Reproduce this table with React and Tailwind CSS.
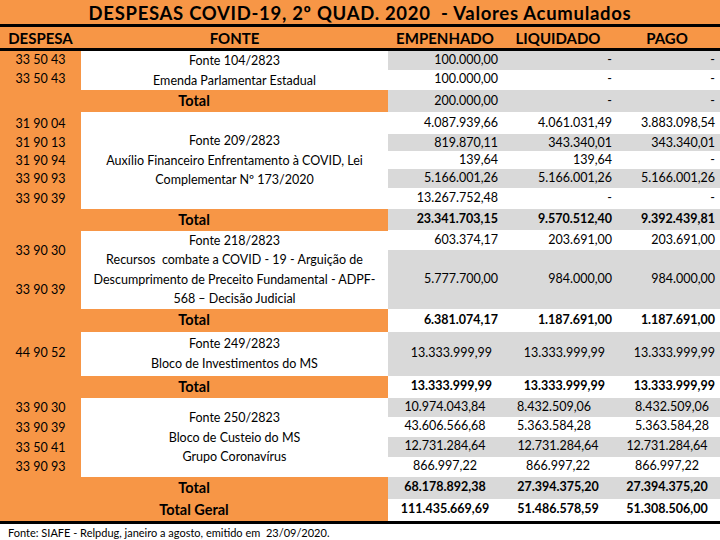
const ORANGE = 'bg-[#f79646]';
const GRAY = 'bg-[#d9d9d9]';

// right-aligned padding for the three value columns
const R = ['justify-end pr-[4px]', 'justify-end pr-[2px]', 'justify-end pr-[5px]'];
const C = ['justify-center', 'justify-center', 'justify-center'];
const B4 = ['justify-end pr-[10px]', 'justify-end pr-[9px]', 'justify-end pr-[5px]'];
const L5 = ['justify-center', 'justify-start pl-[15px]', 'justify-start pl-[21px]'];

const blocks = [
  {
    codes: [
      { t: '33 50 43', h: 'h-[19px]' },
      { t: '33 50 43', h: 'h-[18px]' },
    ],
    fonte: ['Fonte 104/2823', 'Emenda Parlamentar Estadual'],
    rows: [
      { v: ['100.000,00', '-', '-'], h: 'h-[19px]', gray: true },
      { v: ['100.000,00', '-', '-'], h: 'h-[18px]' },
    ],
    total: { v: ['200.000,00', '-', '-'], h: 'h-[22px]', gray: true, plain: true },
  },
  {
    codes: [
      { t: '31 90 04', h: 'h-[22px] pt-[2px]' },
      { t: '31 90 13', h: 'h-[17px] pt-[2px]' },
      { t: '31 90 94', h: 'h-[18px] pt-[2px]' },
      { t: '33 90 93', h: 'h-[19px] pt-[2px]' },
      { t: '33 90 39', h: 'h-[21px] pt-[2px]' },
    ],
    fonte: ['Fonte 209/2823', 'Auxílio Financeiro Enfrentamento à COVID, Lei', 'Complementar Nº 173/2020'],
    rows: [
      { v: ['4.087.939,66', '4.061.031,49', '3.883.098,54'], h: 'h-[22px]' },
      { v: ['819.870,11', '343.340,01', '343.340,01'], h: 'h-[17px]', gray: true },
      { v: ['139,64', '139,64', '-'], h: 'h-[18px]' },
      { v: ['5.166.001,26', '5.166.001,26', '5.166.001,26'], h: 'h-[19px]', gray: true },
      { v: ['13.267.752,48', '-', '-'], h: 'h-[21px]' },
    ],
    total: { v: ['23.341.703,15', '9.570.512,40', '9.392.439,81'], h: 'h-[21px]', gray: true },
  },
  {
    codes: [
      { t: '33 90 30', h: 'h-[42px]' },
      { t: '33 90 39', h: 'h-[36px]' },
    ],
    fonte: [
      'Fonte 218/2823',
      'Recursos  combate a COVID - 19 - Arguição de',
      'Descumprimento de Preceito Fundamental - ADPF-',
      '568 – Decisão Judicial',
    ],
    rows: [
      { v: ['603.374,17', '203.691,00', '203.691,00'], h: 'h-[19px]' },
      { v: ['5.777.700,00', '984.000,00', '984.000,00'], h: 'h-[59px]', gray: true },
    ],
    total: { v: ['6.381.074,17', '1.187.691,00', '1.187.691,00'], h: 'h-[23px]' },
  },
  {
    codes: [{ t: '44 90 52', h: 'h-[44px]' }],
    fonte: ['Fonte 249/2823', 'Bloco de Investimentos do MS'],
    rows: [{ v: ['13.333.999,99', '13.333.999,99', '13.333.999,99'], h: 'h-[44px]', gray: true, al: B4 }],
    total: { v: ['13.333.999,99', '13.333.999,99', '13.333.999,99'], h: 'h-[22px]', al: B4 },
  },
  {
    codes: [
      { t: '33 90 30', h: 'h-[19px] pt-[3px]' },
      { t: '33 90 39', h: 'h-[20px] pt-[3px]' },
      { t: '33 50 41', h: 'h-[20px] pt-[3px]' },
      { t: '33 90 93', h: 'h-[20px] pt-[2px]' },
    ],
    fonte: ['Fonte 250/2823', 'Bloco de Custeio do MS', 'Grupo Coronavírus'],
    rows: [
      { v: ['10.974.043,84', '8.432.509,06', '8.432.509,06'], h: 'h-[19px]', gray: true, al: L5 },
      { v: ['43.606.566,68', '5.363.584,28', '5.363.584,28'], h: 'h-[20px]', al: L5 },
      { v: ['12.731.284,64', '12.731.284,64', '12.731.284,64'], h: 'h-[20px]', gray: true, al: C },
      { v: ['866.997,22', '866.997,22', '866.997,22'], h: 'h-[20px]', al: C },
    ],
    total: { v: ['68.178.892,38', '27.394.375,20', '27.394.375,20'], h: 'h-[22px]', gray: true, al: C },
  },
];

function Values({ row, bold }) {
  const al = row.al || R;
  return (
    <div className={`grid grid-cols-[114px_112px_1fr] ${row.h} ${row.gray ? GRAY : 'bg-white'}`}>
      {row.v.map((v, i) => (
        <div key={i} className={`flex items-center ${al[i]} ${bold ? 'font-bold' : ''}`}>
          {v}
        </div>
      ))}
    </div>
  );
}

function TotalRow({ label, row }) {
  return (
    <div className="flex">
      <div className={`w-[388px] ${ORANGE} flex items-center justify-center text-[14.5px] font-bold`}>
        {label}
      </div>
      <div className="flex-1">
        <Values row={row} bold={!row.plain} />
      </div>
    </div>
  );
}

export default function App() {
  return (
    <div className="w-[720px] h-[540px] bg-white text-black font-['Lato',sans-serif] text-[12.5px] overflow-hidden">
      {/* Title */}
      <div className={`h-[24px] ${ORANGE} flex items-center justify-center text-[18.5px] font-bold tracking-[0.7px] pt-[4px]`}>
        DESPESAS COVID-19, 2º QUAD. 2020&nbsp;&nbsp;- Valores Acumulados
      </div>
      <div className="h-[3px] bg-black" />

      {/* Header */}
      <div className={`h-[21px] ${ORANGE} flex items-center text-[15px] font-bold pt-[1px]`}>
        <div className="w-[81px] text-center">DESPESA</div>
        <div className="w-[307px] text-center">FONTE</div>
        <div className="w-[114px] text-center">EMPENHADO</div>
        <div className="w-[112px] text-center">LIQUIDADO</div>
        <div className="flex-1 text-center">PAGO</div>
      </div>
      <div className="h-[3px] bg-black" />

      {blocks.map((b, i) => (
        <div key={i}>
          <div className="flex">
            <div className={`w-[81px] ${ORANGE} flex flex-col`}>
              {b.codes.map((c, j) => (
                <div key={j} className={`${c.h} flex items-center justify-center`}>
                  {c.t}
                </div>
              ))}
            </div>
            <div className="w-[307px] bg-white flex flex-col items-center justify-center text-[12.5px] leading-[19.5px]">
              {b.fonte.map((f, j) => (
                <div key={j} className="whitespace-pre">{f}</div>
              ))}
            </div>
            <div className="flex-1 flex flex-col">
              {b.rows.map((r, j) => (
                <Values key={j} row={r} />
              ))}
            </div>
          </div>
          <TotalRow label="Total" row={b.total} />
        </div>
      ))}

      <TotalRow
        label="Total Geral"
        row={{ v: ['111.435.669,69', '51.486.578,59', '51.308.506,00'], h: 'h-[22px]', al: C }}
      />
      <div className="h-[3px] bg-black" />

      {/* Footer */}
      <div className="h-[19px] flex items-center pl-[8px] text-[11px]">
        Fonte: SIAFE - Relpdug, janeiro a agosto, emitido em&nbsp;&nbsp;23/09/2020.
      </div>
    </div>
  );
}
